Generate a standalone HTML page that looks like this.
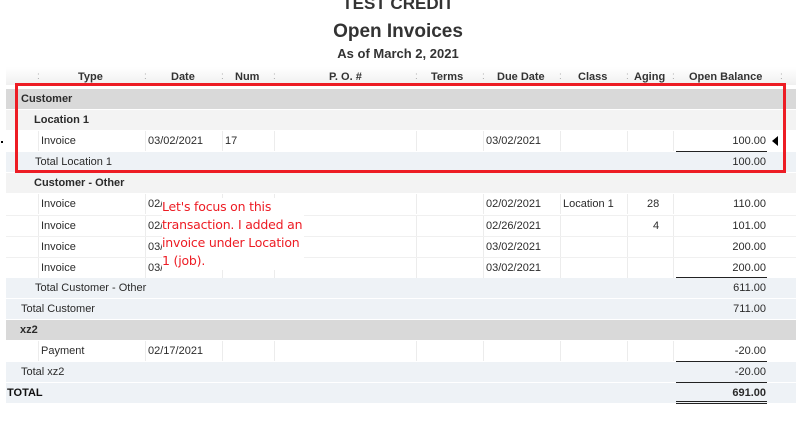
<!DOCTYPE html><html><head><style>
body{margin:0;width:796px;height:428px;background:#fff;font-family:"Liberation Sans",sans-serif;color:#2b2b2b;position:relative;overflow:hidden}
.t{position:absolute;left:0;width:796px;text-align:center;font-weight:bold;color:#333}
.r{position:absolute;left:6px;width:790px;height:20px}
.s{position:absolute;font-size:11px;top:4px;white-space:nowrap}
.b{font-weight:bold}
.v{position:absolute;top:0;height:20px;width:1px;background:#ececec}
.amt{position:absolute;right:30px;top:4px;font-size:11px;text-align:right}
.ul{position:absolute;left:670px;width:91px;height:1px;background:#222}
.h{position:absolute;top:71px;font-size:11px;font-weight:bold;color:#333}
.c{position:absolute;top:71px;font-size:10px;color:#aaa}
</style></head><body>
<div class="t" style="top:-6px;font-size:17px;">TEST CREDIT</div>
<div class="t" style="top:21px;font-size:19px">Open Invoices</div>
<div class="t" style="top:46px;font-size:13px">As of March 2, 2021</div>
<div style="position:absolute;left:6px;top:67px;width:790px;height:18px;background:linear-gradient(#fff,#f0f0f0)"></div>
<span class="c" style="left:37px">:</span><span class="c" style="left:144px">:</span><span class="c" style="left:221px">:</span><span class="c" style="left:273px">:</span><span class="c" style="left:415px">:</span><span class="c" style="left:482px">:</span><span class="c" style="left:559px">:</span><span class="c" style="left:626px">:</span><span class="c" style="left:672px">:</span><span class="c" style="left:780px">:</span>
<span class="h" style="left:78px">Type</span><span class="h" style="left:171px">Date</span><span class="h" style="left:235px">Num</span><span class="h" style="left:329px">P. O. #</span><span class="h" style="left:431px">Terms</span><span class="h" style="left:497px">Due Date</span><span class="h" style="left:578px">Class</span><span class="h" style="left:634px">Aging</span><span class="h" style="left:689px">Open Balance</span>

<div class="r" style="top:89px;background:#d9d9d9"><span class="s b" style="left:15px">Customer</span></div>
<div class="r" style="top:110px;background:#f3f3f3"><span class="s b" style="left:28px">Location 1</span></div>
<div class="r" style="top:131px;background:#fff"><div class="v" style="left:32px"></div><div class="v" style="left:139px"></div><div class="v" style="left:216px"></div><div class="v" style="left:268px"></div><div class="v" style="left:410px"></div><div class="v" style="left:477px"></div><div class="v" style="left:554px"></div><div class="v" style="left:621px"></div><div class="v" style="left:667px"></div><span class="s" style="left:35px">Invoice</span><span class="s" style="left:142px">03/02/2021</span><span class="s" style="left:219px">17</span><span class="s" style="left:480px">03/02/2021</span><span class="amt">100.00</span></div>
<div class="ul" style="top:151px;left:676px"></div>
<div class="r" style="top:152px;background:#eef2f6"><span class="s" style="left:29px">Total Location 1</span><span class="amt">100.00</span></div>
<div class="r" style="top:173px;background:#f3f3f3"><span class="s b" style="left:28px">Customer - Other</span></div>

<div class="r" style="top:194px;background:#fff"><div class="v" style="left:32px"></div><div class="v" style="left:139px"></div><div class="v" style="left:216px"></div><div class="v" style="left:268px"></div><div class="v" style="left:410px"></div><div class="v" style="left:477px"></div><div class="v" style="left:554px"></div><div class="v" style="left:621px"></div><div class="v" style="left:667px"></div><span class="s" style="left:35px">Invoice</span><span class="s" style="left:142px">02/</span><span class="s" style="left:480px">02/02/2021</span><span class="s" style="left:557px">Location 1</span><span class="s" style="left:641px">28</span><span class="amt">110.00</span></div>
<div class="r" style="top:215px;background:#fff;border-top:1px solid #f0f0f0;height:19px"><div class="v" style="left:32px"></div><div class="v" style="left:139px"></div><div class="v" style="left:216px"></div><div class="v" style="left:268px"></div><div class="v" style="left:410px"></div><div class="v" style="left:477px"></div><div class="v" style="left:554px"></div><div class="v" style="left:621px"></div><div class="v" style="left:667px"></div><span class="s" style="left:35px">Invoice</span><span class="s" style="left:142px">02/</span><span class="s" style="left:480px">02/26/2021</span><span class="s" style="left:647px">4</span><span class="amt">101.00</span></div>
<div class="r" style="top:236px;background:#fff;border-top:1px solid #f0f0f0;height:19px"><div class="v" style="left:32px"></div><div class="v" style="left:139px"></div><div class="v" style="left:216px"></div><div class="v" style="left:268px"></div><div class="v" style="left:410px"></div><div class="v" style="left:477px"></div><div class="v" style="left:554px"></div><div class="v" style="left:621px"></div><div class="v" style="left:667px"></div><span class="s" style="left:35px">Invoice</span><span class="s" style="left:142px">03/</span><span class="s" style="left:480px">03/02/2021</span><span class="amt">200.00</span></div>
<div class="r" style="top:257px;background:#fff;border-top:1px solid #f0f0f0;height:19px"><div class="v" style="left:32px"></div><div class="v" style="left:139px"></div><div class="v" style="left:216px"></div><div class="v" style="left:268px"></div><div class="v" style="left:410px"></div><div class="v" style="left:477px"></div><div class="v" style="left:554px"></div><div class="v" style="left:621px"></div><div class="v" style="left:667px"></div><span class="s" style="left:35px">Invoice</span><span class="s" style="left:142px">03/</span><span class="s" style="left:480px">03/02/2021</span><span class="amt">200.00</span></div>
<div class="ul" style="top:277px;left:676px"></div>
<div class="r" style="top:278px;background:#eef2f6"><span class="s" style="left:29px">Total Customer - Other</span><span class="amt">611.00</span></div>
<div class="r" style="top:299px;background:#eef2f6"><span class="s" style="left:15px">Total Customer</span><span class="amt">711.00</span></div>
<div class="r" style="top:320px;background:#d9d9d9"><span class="s b" style="left:14px">xz2</span></div>
<div class="r" style="top:341px;background:#fff"><div class="v" style="left:32px"></div><div class="v" style="left:139px"></div><div class="v" style="left:216px"></div><div class="v" style="left:268px"></div><div class="v" style="left:410px"></div><div class="v" style="left:477px"></div><div class="v" style="left:554px"></div><div class="v" style="left:621px"></div><div class="v" style="left:667px"></div><span class="s" style="left:35px">Payment</span><span class="s" style="left:142px">02/17/2021</span><span class="amt">-20.00</span></div>
<div class="ul" style="top:361px;left:676px"></div>
<div class="r" style="top:362px;background:#eef2f6"><span class="s" style="left:15px">Total xz2</span><span class="amt">-20.00</span></div>
<div class="ul" style="top:382px;left:676px"></div>
<div class="r" style="top:383px;background:#eef2f6"><span class="s b" style="left:1px;color:#111">TOTAL</span><span class="amt b">691.00</span></div>
<div class="ul" style="top:401px;left:676px"></div><div class="ul" style="top:403px;left:676px"></div>

<div style="position:absolute;left:15px;top:83px;width:765px;height:84px;border:3px solid #ed1c24"></div>
<div style="position:absolute;left:772px;top:136px;width:0;height:0;border-top:5px solid transparent;border-bottom:5px solid transparent;border-right:6px solid #000"></div>
<div style="position:absolute;left:1px;top:141px;width:2px;height:2px;background:#000"></div>
<div style="position:absolute;left:162px;top:198px;width:142px;height:72px;background:#fff;color:#ed1c24;font-family:'DejaVu Sans',sans-serif;font-size:12.5px;line-height:18px;letter-spacing:-0.2px">Let's focus on this transaction. I added an invoice under Location 1 (job).</div>
</body></html>
